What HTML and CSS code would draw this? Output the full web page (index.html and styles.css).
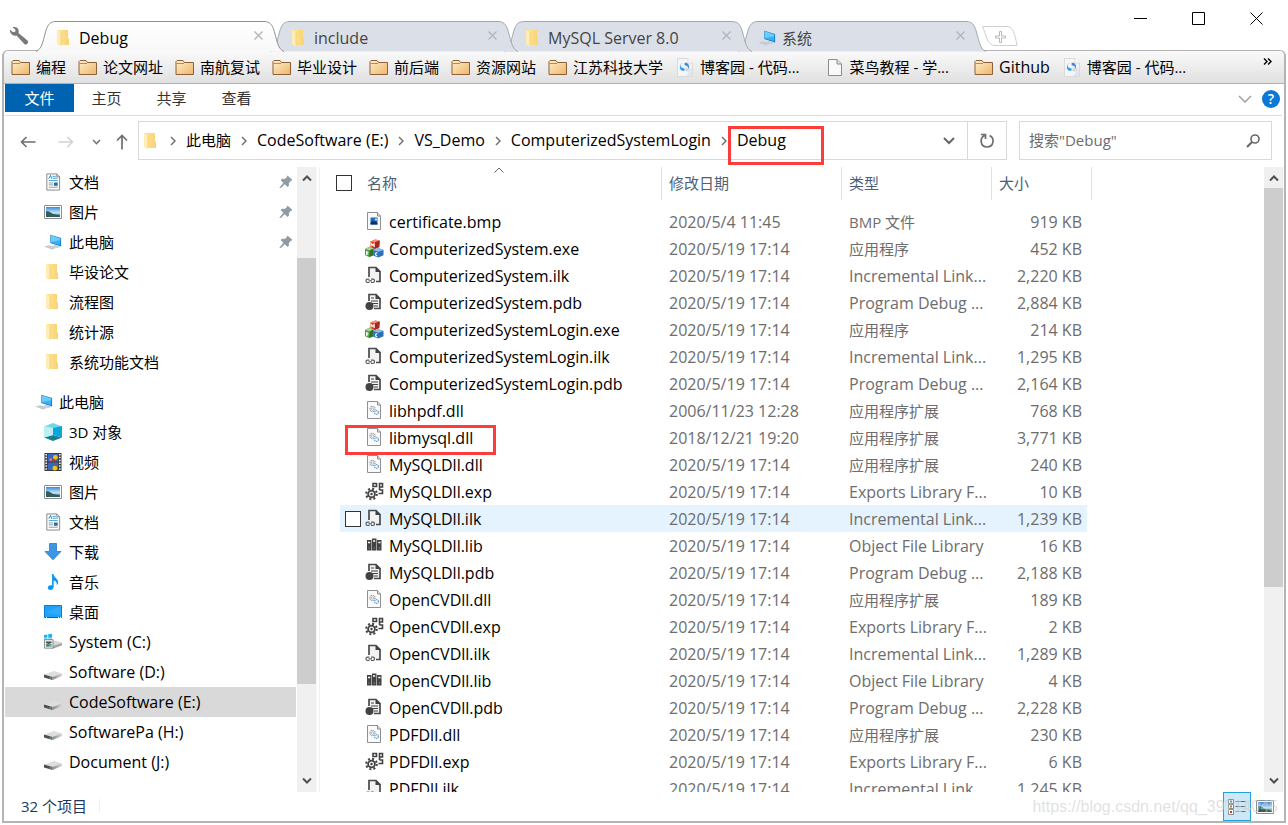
FILE: index.html
```html
<!DOCTYPE html>
<html lang="zh-CN">
<head>
<meta charset="utf-8">
<title>Debug</title>
<link rel="stylesheet" href="styles.css">
</head>
<body>
<svg class="sprite" aria-hidden="true">
  <defs>
    <linearGradient id="g-bm" x1="0" y1="0" x2="1" y2="1"><stop offset="0" stop-color="#fff0c8"/><stop offset="1" stop-color="#eeb46c"/></linearGradient>
    <linearGradient id="g-tab" x1="0" y1="0" x2="0" y2="1"><stop offset="0" stop-color="#ffffff"/><stop offset="1" stop-color="#f8f8f8"/></linearGradient>
    <linearGradient id="g-pic" x1="0" y1="0" x2="0" y2="1"><stop offset="0" stop-color="#3c86dc"/><stop offset=".55" stop-color="#bfe3fa"/><stop offset="1" stop-color="#4d7f86"/></linearGradient>
    <linearGradient id="g-fold" x1="0" y1="0" x2="1" y2="0"><stop offset="0" stop-color="#ffe59a"/><stop offset="1" stop-color="#f8d374"/></linearGradient>
    <linearGradient id="g-drive" x1="0" y1="0" x2="1" y2="0"><stop offset="0" stop-color="#8a8a8a"/><stop offset="1" stop-color="#d6d6d6"/></linearGradient>
  </defs>
  <symbol id="folder" viewBox="0 0 18 18"><path d="M2 1H13V9L14 10V16H3Z" fill="url(#g-fold)"/><path d="M2 1L6 3V17.500L2 15Z" fill="#ffedb5"/><path d="M6 3V16" stroke="#ecc76a" stroke-width=".6"/></symbol>
  <symbol id="bm-folder" viewBox="0 0 20 17"><path d="M1 15.500V2.500L2 1.500H8L9.500 3.500H18.500V15.500Z" fill="url(#g-bm)" stroke="#8d6038"/><path d="M1.500 4.500H9" stroke="#b98a55" fill="none"/></symbol>
  <symbol id="site" viewBox="0 0 16 19"><path d="M.5.5H11L15.500 5V18.500H.5Z" fill="#f4f5f6" stroke="#d8dade"/><path d="M11 .5V5H15.500" fill="#fff" stroke="#d8dade"/><path d="M6 12L12 14.500L9 18H15V11L11 7Z" fill="#e2e5e9"/><path d="M6.500 4.500C2.500 6 3 9.500 6 10C8 10.500 8 11.500 7 12.800C3.500 13 2.500 10.500 3 8C3.400 6 4.800 5 6.500 4.500Z" fill="#2f9df0"/><path d="M8.500 13C12.500 11.500 12 8.500 9.200 7.800C7.500 7.300 7 6.300 8 4.800C11 4.600 12.300 7 12 9.500C11.600 11.500 10.500 12.500 8.500 13Z" fill="#3e86dc"/></symbol>
  <symbol id="page" viewBox="0 0 16 19"><path d="M1.500 1.500H10L14.500 6V17.500H1.500Z" fill="#fafafa" stroke="#8c8c8c"/><path d="M10 1.500V6H14.500" fill="#ddd" stroke="#8c8c8c"/></symbol>
  <symbol id="pc" viewBox="0 0 20 18"><path d="M7 1L19 4.500V14L7 10Z" fill="#1779c4"/><path d="M7.500 1.500L18 5V12.500L7.500 9.500Z" fill="#35b1f5"/><path d="M7.500 1.500L18 5V7L7.500 9Z" fill="#6ccbfb"/><path d="M12 12L18 14L15 16L9 14Z" fill="#c9ced3"/><path d="M0 14L5 12.500L14 15.500L9 17.500Z" fill="#d3d7dc"/><path d="M2 14L10 16.500M5 13L12 15.500" stroke="#adb3b9" stroke-width=".6"/></symbol>
  <symbol id="doc" viewBox="0 0 18 19"><path d="M2.500 1H13L16 4V18H2.500Z" fill="#fff" stroke="#7f8589"/><path d="M13 1V4H16" fill="none" stroke="#7f8589"/><path d="M4.500 6L6.500 2.500L7.500 6" stroke="#1a7fc4" fill="none"/><path d="M8.500 3.500H12M8.500 5.500H14M4.500 8H14" stroke="#3a9fd8"/><path d="M4.500 10.500H9M4.500 12.500H9M4.500 15H14" stroke="#8e979d"/><path d="M10 10H14V13.500H10Z" fill="#2c6f9e"/></symbol>
  <symbol id="picture" viewBox="0 0 18 14"><path d="M.5.5H17.500V13.500H.5Z" fill="#fff" stroke="#8c8f92"/><path d="M2 2H16V12H2Z" fill="url(#g-pic)"/><path d="M2 6L5 6.500L9 9L16 10V12H2Z" fill="#315f5c"/></symbol>
  <symbol id="pin" viewBox="0 0 14 14"><path d="M8.500 1L13 5L11.500 5.600L9.500 8.200V10.800L8.500 11.500L5.700 8.800L1.500 13L1 12.500L4.700 7.800L2 5L3 4.200L6 4.300L8.200 2.300Z" fill="#8e9ba5" stroke="#8e9ba5" stroke-width=".8"/></symbol>
  <symbol id="cube" viewBox="0 0 18 18"><path d="M9 0L18 3.500L9 7L0 3.500Z" fill="#6fd8e6"/><path d="M0 14.500L9 12L18 14.500L9 18Z" fill="#14808f"/><path d="M9 5L0 3V14.500L9 12Z" fill="#bdeff2"/><path d="M9 5L18 3V14.500L9 12Z" fill="#0aa7da"/></symbol>
  <symbol id="video" viewBox="0 0 18 19"><path d="M0 0H18V19H0Z" fill="#3b3b3b"/><path d="M3.500 1H14.500V9H3.500ZM3.500 10H14.500V18H3.500Z" fill="#3569c0"/><circle cx="11.500" cy="4.500" r="2.500" fill="#f0c417"/><circle cx="6.500" cy="7" r="1.500" fill="#e86aa0"/><circle cx="9.500" cy="7.500" r="1.500" fill="#cf2e1e"/><circle cx="11" cy="16" r="2.500" fill="#f0c417"/><path d="M11 9.500L13 12H10Z" fill="#c73d20"/><path d="M1.800 1V19M16.200 1V19" stroke="#fff" stroke-width="1.600" stroke-dasharray="1.600 1.400"/></symbol>
  <symbol id="download" viewBox="0 0 18 18"><path d="M5.500.5H12.500V8.500H17L9 16.800L1 8.500H5.500Z" fill="#3c96e8" stroke="#2b79c4" stroke-width=".8"/></symbol>
  <symbol id="music" viewBox="0 0 18 19"><path d="M8 1H9.500C10 5 14 5.500 14.500 9.500C14.500 11.500 13.500 12.500 13 13C13.500 9.500 11.500 8.500 9.700 8V14.500C9.700 18.500 3.500 19 3.500 15.600C3.500 13 6 12.500 8 13Z" fill="#0a99f2"/></symbol>
  <symbol id="desktop" viewBox="0 0 18 14"><path d="M.5.5H17.500V12.500H.5Z" fill="#1ea1fb" stroke="#0b7dd0"/><path d="M1 8L17 1V10Z" fill="#42b4ff" opacity=".5"/><path d="M1 12.500H17" stroke="#0f5f9e"/><path d="M2 12.500H3M14 12.500H15M16 12.500H17" stroke="#fff"/></symbol>
  <symbol id="drive" viewBox="0 0 18 18"><path d="M0 11.500L10 8L18 10.500L9 14.500Z" fill="#dedede"/><path d="M0 11.500L8.500 14V17L0 14.500Z" fill="#4b4f50"/><path d="M8.500 14L18 10.500V13L8.500 17Z" fill="url(#g-drive)"/><path d="M5.500 15H7.500" stroke="#7fd28a"/></symbol>
  <symbol id="sysdrive" viewBox="0 0 19 18"><path d="M5 11.500L11 7.500L19 9.500V12.500L9 16L5 14.500Z" fill="#d8d8d8"/><path d="M9 13.500L19 10V12.500L9 16Z" fill="#a3a3a3"/><path d="M0 1.500L3.600 1V4.400H0ZM4.400.9L8.500.3V4.400H4.400ZM0 5.200H3.600V8H0ZM4.400 5.200H8.500V8.400H4.400Z" fill="#19b5ee"/><path d="M.5 6.500H9.500V15.500H.5Z" fill="#eef1f0" stroke="#858b8b"/><path d="M2 8.500H8V10L5 11L2 10Z" fill="#5a4b48"/><path d="M2 11H8V14H2Z" fill="#6aa095"/><circle cx="4" cy="12.500" r="1.200" fill="#3171a5"/></symbol>
  <symbol id="bmp" viewBox="0 0 19 19"><path d="M2.500.5H12.500L15.500 4V17.500H2.500Z" fill="#fafafa" stroke="#8f8f8f"/><path d="M12.500.5V4H15.500" fill="#ddd" stroke="#8f8f8f"/><path d="M5.500 5.500H12.500V12.500H5.500Z" fill="#1a6cc4"/><path d="M5.500 12.500V11L7.500 8.500L9 10L10.500 9L12.500 11.500V12.500Z" fill="#0b2f5e"/><circle cx="11" cy="7.500" r="1" fill="#fff"/></symbol>
  <symbol id="exe" viewBox="0 0 20 20"><path d="M5.500 2.500L11 .5L15.500 1.500L15 8.500L10 10.500L5 8.500Z" fill="#d8402c"/><path d="M5.500 2.500L11 .5L15.500 1.500L10.500 3.500Z" fill="#f1907e"/><path d="M10.500 3.500L15.500 1.500L15 8.500L10 10.500Z" fill="#a82919"/><path d="M0 10.500L4 8.500L9 10V17L4.500 19L0 17Z" fill="#4b9c3c"/><path d="M0 10.500L4 8.500L9 10L5 12Z" fill="#a3d690"/><path d="M5 12L9 10V17L4.500 19Z" fill="#2f7228"/><path d="M9 11.500L14 9.500L19.500 11.500V17L14 19.500L9 17.500Z" fill="#2d6fb9"/><path d="M9 11.500L14 9.500L19.500 11.500L14 13.500Z" fill="#8dc0ee"/><path d="M6.300 8V4.500L8 6.500L9.600 5V8.500M1.700 17V13.500L3.700 14M1.700 15.300L3.500 15.600M13 14.700C10.500 13.700 10.500 17.700 13 17.700" fill="none" stroke="#fff" stroke-width="1.200"/></symbol>
  <symbol id="ilk" viewBox="0 0 19 19"><path d="M4 11V1.500H11L15 5.500V15.500H11" fill="#f1f2f3" stroke="#4a4a4a" stroke-width="1.700"/><path d="M10.500 1V6H16Z" fill="#424242"/><path d="M4.500 13.200H2.500C.5 13.200.5 16.500 2.500 16.500H4.500M6 13.200H8C10 13.200 10 16.500 8 16.500H6M3.500 14.900H7" fill="none" stroke="#5a5a5a" stroke-width="1.200"/></symbol>
  <symbol id="pdb" viewBox="0 0 19 19"><path d="M4 8V1.500H11L15 5.500V15.500H9" fill="#f1f2f3" stroke="#4a4a4a" stroke-width="1.700"/><path d="M10.500 1V6H16Z" fill="#424242"/><path d="M6 5H9M6 8H13M7 10.500H13M9 13H13" stroke="#424242" stroke-width="1.200"/><circle cx="4.500" cy="13" r="4" fill="#424242"/></symbol>
  <symbol id="dll" viewBox="0 0 19 19"><path d="M2.500.5H12.500L15.500 4V17.500H2.500Z" fill="#fafafa" stroke="#8f8f8f"/><path d="M12.500.5V4H15.500" fill="#ddd" stroke="#8f8f8f"/><circle cx="7.500" cy="8" r="2.600" fill="none" stroke="#98a2aa" stroke-width="1.300" stroke-dasharray="1.300 .7"/><circle cx="7.500" cy="8" r="1.200" fill="none" stroke="#9aa5ad" stroke-width=".7"/><circle cx="11.500" cy="11.500" r="1.900" fill="none" stroke="#6ea5cf" stroke-width="1.300" stroke-dasharray="1.300 .6"/></symbol>
  <symbol id="exp" viewBox="0 0 19 19"><circle cx="6.500" cy="12" r="3.400" fill="#f4f4f4" stroke="#424242" stroke-width="1.800"/><circle cx="6.500" cy="12" r="5.300" fill="none" stroke="#424242" stroke-width="2" stroke-dasharray="2 2.160"/><circle cx="6.500" cy="12" r="1.200" fill="#424242"/><path d="M8 1.500H11.500V4.500H8ZM14.500 1.500H17.500V5H14.500ZM14.500 8H17.500V11.500H13.500M14.500 8V5" fill="none" stroke="#424242" stroke-width="1.600"/></symbol>
  <symbol id="lib" viewBox="0 0 19 19"><path d="M2 4H6.500V14.500H2ZM7 2.500H11.500V14.500H7ZM12 4H16.500V14.500H12Z" fill="#424242"/><path d="M3 6.500H5.200M8 5H10.200M13.300 6.500H15.500" stroke="#fff" stroke-width="1.600"/><path d="M3.500 12H4.500M8.700 12H9.700M14 12H15" stroke="#aaa"/></symbol>
  <symbol id="sep" viewBox="0 0 6 10"><path d="M1 1L5 5L1 9" fill="none" stroke="#707070" stroke-width="1.500"/></symbol>
  <symbol id="tab-shape" viewBox="0 0 248 31"><path d="M0 30.500C6 28 7 20 9 13C11 5 13 .5 20 .5H228C235 .5 237 5 239 13C241 20 242 28 248 30.500"/></symbol>
  <symbol id="close" viewBox="0 0 9 9"><path d="M.5.5L8.500 8.500M8.500.5L.5 8.500" stroke="#b5b5b5" stroke-width="1.400"/></symbol>
  <symbol id="up" viewBox="0 0 10 7"><path d="M1 5.500L5 1.500L9 5.500" fill="none" stroke="#505050" stroke-width="2"/></symbol>
  <symbol id="down" viewBox="0 0 10 7"><path d="M1 1.500L5 5.500L9 1.500" fill="none" stroke="#505050" stroke-width="2"/></symbol>
</svg>

<header class="strip">
  <button class="wrench" aria-label="设置"><svg viewBox="0 0 20 20" width="20" height="20"><path d="M3.500 1.500C6.500.2 9.500 2 9.700 5C9.800 6 9.700 6.500 9.500 7L18.800 14.800C20 17 17.500 19.500 15.500 18.300L7.500 9.500C5 10.300 1.500 8.500 1 5.500C.9 5 1 4.300 1.200 3.800L4 6.300L6.500 5.500L6.300 3.500Z" fill="#7a7a7a"/></svg></button>
  <nav class="tabs">
    <a class="tab active" href="#"><svg class="shape"><use href="#tab-shape"/></svg><svg class="i18"><use href="#folder"/></svg><span class="latin">Debug</span><svg class="x"><use href="#close"/></svg></a>
    <a class="tab second" href="#"><svg class="shape"><use href="#tab-shape"/></svg><svg class="i18"><use href="#folder"/></svg><span class="latin">include</span><svg class="x"><use href="#close"/></svg></a>
    <a class="tab third" href="#"><svg class="shape"><use href="#tab-shape"/></svg><svg class="i18"><use href="#folder"/></svg><span class="latin">MySQL Server 8.0</span><svg class="x"><use href="#close"/></svg></a>
    <a class="tab" href="#"><svg class="shape"><use href="#tab-shape"/></svg><svg class="i18"><use href="#pc"/></svg><span>系统</span><svg class="x"><use href="#close"/></svg></a>
  </nav>
  <button class="newtab" aria-label="新标签"><svg viewBox="0 0 36 20" width="36" height="20"><path d="M.5.5H25C31 .5 33 8 35 19.500H13C5 19.500 4 8 .5.500Z" fill="#fff" stroke="#cfcfcf"/><path d="M17.500 5.500H19.500V10H23.500V12H19.500V16.500H17.500V12H13.500V10H17.500Z" fill="#fff" stroke="#b8b8b8"/></svg></button>
  <div class="winbtns">
    <button aria-label="最小化"><svg viewBox="0 0 13 13" width="13" height="13"><path d="M0 6.500H13" stroke="#000"/></svg></button>
    <button aria-label="最大化"><svg viewBox="0 0 13 13" width="13" height="13"><path d="M.5.5H12.500V12.500H.5Z" fill="none" stroke="#000"/></svg></button>
    <button aria-label="关闭"><svg viewBox="0 0 13 13" width="13" height="13"><path d="M.5.5L12.500 12.500M12.500.5L.5 12.500" stroke="#000"/></svg></button>
  </div>
</header>

<div class="window">
  <nav class="bookmarks">
    <a href="#"><svg><use href="#bm-folder"/></svg>编程</a>
    <a href="#"><svg><use href="#bm-folder"/></svg>论文网址</a>
    <a href="#"><svg><use href="#bm-folder"/></svg>南航复试</a>
    <a href="#"><svg><use href="#bm-folder"/></svg>毕业设计</a>
    <a href="#"><svg><use href="#bm-folder"/></svg>前后端</a>
    <a href="#"><svg><use href="#bm-folder"/></svg>资源网站</a>
    <a href="#"><svg><use href="#bm-folder"/></svg>江苏科技大学</a>
    <a href="#" class="site"><svg><use href="#site"/></svg>博客园 - 代码...</a>
    <a href="#" class="site"><svg><use href="#page"/></svg>菜鸟教程 - 学...</a>
    <a href="#" class="latin"><svg><use href="#bm-folder"/></svg>Github</a>
    <a href="#" class="site"><svg><use href="#site"/></svg>博客园 - 代码...</a>
    <button class="more" aria-label="更多"><svg viewBox="0 0 9 7" width="9" height="7"><path d="M1 .5L4 3.500L1 6.500M5 .5L8 3.500L5 6.500" fill="none" stroke="#000" stroke-width="1.400"/></svg></button>
  </nav>

  <div class="ribbon">
    <button class="file">文件</button>
    <button>主页</button>
    <button>共享</button>
    <button>查看</button>
    <span class="ribbon-end">
      <svg viewBox="0 0 14 8" width="14" height="8"><path d="M1 1L7 7L13 1" fill="none" stroke="#999" stroke-width="1.300"/></svg>
      <button class="help" aria-label="帮助">?</button>
    </span>
  </div>

  <div class="navbar">
    <div class="history">
      <button aria-label="后退"><svg viewBox="0 0 16 12" width="16" height="12"><path d="M15.500 6H1.500M6.500 1L1.500 6L6.500 11" fill="none" stroke="#6e6e6e" stroke-width="1.600"/></svg></button>
      <button aria-label="前进"><svg viewBox="0 0 16 12" width="16" height="12"><path d="M.5 6H14.500M9.500 1L14.500 6L9.500 11" fill="none" stroke="#d2d2d2" stroke-width="1.600"/></svg></button>
      <button aria-label="最近"><svg viewBox="0 0 9 6" width="9" height="6"><path d="M1 1L4.500 4.500L8 1" fill="none" stroke="#777" stroke-width="1.600"/></svg></button>
      <button aria-label="上移"><svg viewBox="0 0 12 16" width="12" height="16"><path d="M6 15.500V1.500M1 6.500L6 1.500L11 6.500" fill="none" stroke="#6e6e6e" stroke-width="1.700"/></svg></button>
    </div>
    <div class="address">
      <svg class="i18"><use href="#folder"/></svg>
      <svg class="sep"><use href="#sep"/></svg><a href="#">此电脑</a>
      <svg class="sep"><use href="#sep"/></svg><a href="#" class="latin">CodeSoftware (E:)</a>
      <svg class="sep"><use href="#sep"/></svg><a href="#" class="latin">VS_Demo</a>
      <svg class="sep"><use href="#sep"/></svg><a href="#" class="latin">ComputerizedSystemLogin</a>
      <svg class="sep"><use href="#sep"/></svg><a href="#" class="latin marked">Debug</a>
      <button class="drop" aria-label="历史记录"><svg viewBox="0 0 12 8" width="12" height="8"><path d="M1 1L6 6L11 1" fill="none" stroke="#666" stroke-width="2"/></svg></button>
      <button class="refresh" aria-label="刷新"><svg viewBox="0 0 16 16" width="16" height="16"><path d="M2 1.500H6.500V6M5.500 2.500C.5 5 1 14 8 14C15 14 16 5 10.500 2.500" fill="none" stroke="#6e6e6e" stroke-width="1.700"/></svg></button>
    </div>
    <label class="search"><input type="text" placeholder="搜索&quot;Debug&quot;" aria-label="搜索"><svg viewBox="0 0 14 14" width="14" height="14"><circle cx="9" cy="5" r="4" fill="none" stroke="#666" stroke-width="1.600"/><path d="M6 8L1 13" stroke="#666" stroke-width="2"/></svg></label>
  </div>

  <div class="panes">
    <nav class="tree">
      <a href="#"><svg><use href="#doc"/></svg>文档<svg class="pin"><use href="#pin"/></svg></a>
      <a href="#"><svg><use href="#picture"/></svg>图片<svg class="pin"><use href="#pin"/></svg></a>
      <a href="#"><svg><use href="#pc"/></svg>此电脑<svg class="pin"><use href="#pin"/></svg></a>
      <a href="#"><svg><use href="#folder"/></svg>毕设论文</a>
      <a href="#"><svg><use href="#folder"/></svg>流程图</a>
      <a href="#"><svg><use href="#folder"/></svg>统计源</a>
      <a href="#"><svg><use href="#folder"/></svg>系统功能文档</a>
      <a href="#" class="root"><svg><use href="#pc"/></svg>此电脑</a>
      <a href="#"><svg><use href="#cube"/></svg>3D 对象</a>
      <a href="#"><svg><use href="#video"/></svg>视频</a>
      <a href="#"><svg><use href="#picture"/></svg>图片</a>
      <a href="#"><svg><use href="#doc"/></svg>文档</a>
      <a href="#"><svg><use href="#download"/></svg>下载</a>
      <a href="#"><svg><use href="#music"/></svg>音乐</a>
      <a href="#"><svg><use href="#desktop"/></svg>桌面</a>
      <a href="#" class="latin"><svg><use href="#sysdrive"/></svg>System (C:)</a>
      <a href="#" class="latin"><svg><use href="#drive"/></svg>Software (D:)</a>
      <a href="#" class="latin current"><svg><use href="#drive"/></svg>CodeSoftware (E:)</a>
      <a href="#" class="latin"><svg><use href="#drive"/></svg>SoftwarePa (H:)</a>
      <a href="#" class="latin"><svg><use href="#drive"/></svg>Document (J:)</a>
    </nav>
    <div class="scroll tree-scroll"><svg><use href="#up"/></svg><div class="track"><div class="thumb"></div></div><svg><use href="#down"/></svg></div>

    <main class="files">
      <table>
        <colgroup><col class="c-name"><col class="c-date"><col class="c-type"><col class="c-size"></colgroup>
        <thead>
          <tr><th><label class="head-name"><input type="checkbox">名称</label><svg class="sort" viewBox="0 0 10 6"><path d="M.5 5.500L5 1L9.500 5.500" fill="none" stroke="#666"/></svg></th><th>修改日期</th><th>类型</th><th>大小</th></tr>
        </thead>
        <tbody>
          <tr><td><div class="fname"><svg><use href="#bmp"/></svg>certificate.bmp</div></td><td>2020/5/4 11:45</td><td class="cn">BMP 文件</td><td>919 KB</td></tr>
          <tr><td><div class="fname"><svg><use href="#exe"/></svg>ComputerizedSystem.exe</div></td><td>2020/5/19 17:14</td><td class="cn">应用程序</td><td>452 KB</td></tr>
          <tr><td><div class="fname"><svg><use href="#ilk"/></svg>ComputerizedSystem.ilk</div></td><td>2020/5/19 17:14</td><td>Incremental Link...</td><td>2,220 KB</td></tr>
          <tr><td><div class="fname"><svg><use href="#pdb"/></svg>ComputerizedSystem.pdb</div></td><td>2020/5/19 17:14</td><td>Program Debug ...</td><td>2,884 KB</td></tr>
          <tr><td><div class="fname"><svg><use href="#exe"/></svg>ComputerizedSystemLogin.exe</div></td><td>2020/5/19 17:14</td><td class="cn">应用程序</td><td>214 KB</td></tr>
          <tr><td><div class="fname"><svg><use href="#ilk"/></svg>ComputerizedSystemLogin.ilk</div></td><td>2020/5/19 17:14</td><td>Incremental Link...</td><td>1,295 KB</td></tr>
          <tr><td><div class="fname"><svg><use href="#pdb"/></svg>ComputerizedSystemLogin.pdb</div></td><td>2020/5/19 17:14</td><td>Program Debug ...</td><td>2,164 KB</td></tr>
          <tr><td><div class="fname"><svg><use href="#dll"/></svg>libhpdf.dll</div></td><td>2006/11/23 12:28</td><td class="cn">应用程序扩展</td><td>768 KB</td></tr>
          <tr><td><div class="fname marked"><svg><use href="#dll"/></svg>libmysql.dll</div></td><td>2018/12/21 19:20</td><td class="cn">应用程序扩展</td><td>3,771 KB</td></tr>
          <tr><td><div class="fname"><svg><use href="#dll"/></svg>MySQLDll.dll</div></td><td>2020/5/19 17:14</td><td class="cn">应用程序扩展</td><td>240 KB</td></tr>
          <tr><td><div class="fname"><svg><use href="#exp"/></svg>MySQLDll.exp</div></td><td>2020/5/19 17:14</td><td>Exports Library F...</td><td>10 KB</td></tr>
          <tr class="hover"><td><div class="fname"><input type="checkbox" aria-label="选择 MySQLDll.ilk"><svg><use href="#ilk"/></svg>MySQLDll.ilk</div></td><td>2020/5/19 17:14</td><td>Incremental Link...</td><td>1,239 KB</td></tr>
          <tr><td><div class="fname"><svg><use href="#lib"/></svg>MySQLDll.lib</div></td><td>2020/5/19 17:14</td><td>Object File Library</td><td>16 KB</td></tr>
          <tr><td><div class="fname"><svg><use href="#pdb"/></svg>MySQLDll.pdb</div></td><td>2020/5/19 17:14</td><td>Program Debug ...</td><td>2,188 KB</td></tr>
          <tr><td><div class="fname"><svg><use href="#dll"/></svg>OpenCVDll.dll</div></td><td>2020/5/19 17:14</td><td class="cn">应用程序扩展</td><td>189 KB</td></tr>
          <tr><td><div class="fname"><svg><use href="#exp"/></svg>OpenCVDll.exp</div></td><td>2020/5/19 17:14</td><td>Exports Library F...</td><td>2 KB</td></tr>
          <tr><td><div class="fname"><svg><use href="#ilk"/></svg>OpenCVDll.ilk</div></td><td>2020/5/19 17:14</td><td>Incremental Link...</td><td>1,289 KB</td></tr>
          <tr><td><div class="fname"><svg><use href="#lib"/></svg>OpenCVDll.lib</div></td><td>2020/5/19 17:14</td><td>Object File Library</td><td>4 KB</td></tr>
          <tr><td><div class="fname"><svg><use href="#pdb"/></svg>OpenCVDll.pdb</div></td><td>2020/5/19 17:14</td><td>Program Debug ...</td><td>2,228 KB</td></tr>
          <tr><td><div class="fname"><svg><use href="#dll"/></svg>PDFDll.dll</div></td><td>2020/5/19 17:14</td><td class="cn">应用程序扩展</td><td>230 KB</td></tr>
          <tr><td><div class="fname"><svg><use href="#exp"/></svg>PDFDll.exp</div></td><td>2020/5/19 17:14</td><td>Exports Library F...</td><td>6 KB</td></tr>
          <tr><td><div class="fname"><svg><use href="#ilk"/></svg>PDFDll.ilk</div></td><td>2020/5/19 17:14</td><td>Incremental Link...</td><td>1,245 KB</td></tr>
        </tbody>
      </table>
    </main>
    <div class="scroll file-scroll"><svg><use href="#up"/></svg><div class="track"><div class="thumb"></div></div><svg><use href="#down"/></svg></div>
  </div>

  <footer class="status">
    <span class="count">32 个项目</span>
    <div class="views">
      <button class="on" aria-label="详细信息"><svg viewBox="0 0 18 16" width="18" height="16"><path d="M.5.5H5.500V4.500H.5ZM.5 5.500H5.500V9.500H.5ZM.5 10.500H5.500V15.500H.5Z" fill="#fff" stroke="#8d8d8d"/><path d="M2 2.500H4" stroke="#3c6fa0" stroke-width="2"/><path d="M2 7.500H4" stroke="#9b8a2c" stroke-width="2"/><path d="M2 13H4" stroke="#c43a22" stroke-width="2"/><path d="M7.500 2.500H11.500M12.500 2.500H17.500M7.500 7.500H11.500M12.500 7.500H17.500M7.500 12.500H11.500M12.500 12.500H17.500" stroke="#6b6b6b"/></svg></button>
      <button aria-label="缩略图"><svg width="18" height="14"><use href="#picture"/></svg></button>
    </div>
    <span class="watermark">https://blog.csdn.net/qq_39714045</span>
  </footer>
</div>
</body>
</html>
```

FILE: styles.css
```css
*, *::before, *::after { box-sizing: border-box; }

body {
  margin: 0;
  height: 100vh;
  display: flex;
  flex-direction: column;
  background: #fff;
  color: #000;
  font: 15px/20px "Open Sans", "Noto Sans CJK SC", sans-serif;
  overflow: hidden;
}

a { color: inherit; text-decoration: none; }
button { border: 0; padding: 0; background: none; font: inherit; color: inherit; display: flex; align-items: center; justify-content: center; }
svg { flex: none; display: block; }
.sprite { position: absolute; width: 0; height: 0; }
.i18 { width: 18px; height: 18px; }
.latin { font-size: 16px; }

/* Tab strip */
.strip { display: flex; height: 51px; flex: none; padding-left: 9px; align-items: flex-end; }
.wrench { width: 20px; margin: 0 14px 5px 0; }
.tabs { display: flex; }
.tab { position: relative; z-index: 1; width: 234px; height: 30px; display: flex; align-items: center; gap: 6px; padding: 4px 14px 0 13px; color: #444; }
.tab .shape { position: absolute; left: -7px; top: 0; width: 248px; height: 31px; fill: #dbe0e8; stroke: #a4a7ab; z-index: -1; }
.tab.third { z-index: 2; }
.tab.second { z-index: 3; }
.tab.active { z-index: 5; padding-left: 12px; color: #000; }
.tab.active .shape { fill: url(#g-tab); stroke: #909090; }
.tab .x { width: 9px; height: 9px; margin: 0 0 6px auto; }
.newtab { margin: 0 0 5px 3px; }
.winbtns { margin: 0 25px 26px auto; display: flex; gap: 45px; }

/* Window frame */
.window { flex: 1; min-height: 0; display: flex; flex-direction: column; margin: -1px 2px 2px; border: 2px solid #b4b4b4; border-top-width: 1px; border-radius: 6px 6px 0 0; position: relative; }

.bookmarks { height: 33px; flex: none; display: flex; align-items: center; padding: 0 12px 0 7px; background: linear-gradient(#fafafa, #e0e0e0); border-bottom: 1px solid #b0b0b0; border-radius: 5px 5px 0 0; white-space: nowrap; }
.bookmarks a { display: flex; align-items: center; gap: 5px; margin-right: 12px; }
.bookmarks a svg { width: 20px; height: 17px; }
.bookmarks a.site { gap: 7px; margin: 0 25px 0 2px; }
.bookmarks a.site svg { width: 16px; height: 19px; }
.more { margin: 0 0 12px auto; }

.ribbon { display: flex; height: 32px; flex: none; margin: 0 2px 0 1px; border-bottom: 1px solid #dcdcdc; color: #333; }
.ribbon > button { width: 65px; height: 28px; }
.ribbon > .file { width: 69px; background: #0063b1; color: #fff; }
.ribbon-end { margin-left: auto; display: flex; align-items: center; gap: 10px; padding: 0 2px 2px 0; }
.help { width: 18px; height: 18px; border-radius: 50%; background: #0a78d6; color: #fff; font-size: 14px; font-weight: 600; }

.navbar { height: 51px; flex: none; display: flex; padding: 5px 12px 7px 16px; }
.history { width: 118px; flex: none; display: flex; align-items: center; gap: 20px; padding-top: 2px; }
.history button:nth-child(2) { margin-left: 2px; }
.history button:nth-child(3) { margin-left: -2px; }
.history button:nth-child(4) { margin-left: -5px; }
.address { flex: 1; min-width: 0; display: flex; align-items: center; border: 1px solid #d9d9d9; padding-left: 3px; white-space: nowrap; }
.address a { padding-bottom: 2px; }
.sep { width: 6px; height: 10px; margin: 0 10px; }
.address .marked { position: relative; }
.address .marked::after { content: ""; position: absolute; left: -9px; top: -4px; width: 96px; height: 39px; border: 3px solid #fd3c3c; }
.drop { width: 36px; margin-left: auto; }
.refresh { width: 39px; height: 37px; border-left: 1px solid #d9d9d9; }
.search { width: 253px; flex: none; margin-left: 12px; display: flex; align-items: center; border: 1px solid #d9d9d9; padding: 0 11px 0 9px; }
.search input { flex: 1; min-width: 0; border: 0; padding: 0 0 2px; background: none; outline: 0; font: inherit; }
.search input::placeholder { color: #6d6d6d; opacity: 1; }

/* Panes */
.panes { flex: 1; min-height: 0; display: flex; }
.tree { width: 293px; flex: none; overflow: hidden; padding-left: 1px; }
.tree a { display: flex; align-items: center; height: 30px; gap: 7px; padding: 0 3px 0 39px; margin-right: 1px; }
.tree a svg { width: 18px; height: 18px; }
.tree .root { padding-left: 30px; margin-top: 10px; gap: 6px; }
.tree .current { background: #d9d9d9; }
.tree a .pin { width: 14px; height: 14px; margin-left: auto; }

.scroll { width: 20px; flex: none; background: #f0f0f0; border-right: 1px solid #f8f8f8; display: flex; flex-direction: column; align-items: center; padding: 8px 0; }
.scroll svg { width: 10px; height: 7px; }
.track { flex: 1; align-self: stretch; padding: 6px 0; display: flex; flex-direction: column; }
.thumb { background: #cdcdcd; }
.tree-scroll .track { padding-top: 76px; }
.tree-scroll .thumb { flex: 0 0 83%; }
.file-scroll .thumb { flex: 0 0 68.5%; }

.files { flex: 1; min-width: 0; overflow: hidden; margin-left: 2px; border-left: 1px solid #f0f0f0; padding-left: 16px; }
table { table-layout: fixed; width: 756px; border-collapse: separate; border-spacing: 0; color: #6d6d6d; font-size: 16px; }
.c-name { width: 326px; }
.c-date { width: 180px; }
.c-type { width: 150px; }
.c-size { width: 100px; }
th { height: 33px; padding: 0 0 2px 7px; font-weight: 400; font-size: 15px; text-align: left; color: #4c607a; border-right: 1px solid #e2e2e2; position: relative; }
th:first-child { padding-left: 0; }
.head-name { display: flex; align-items: center; gap: 15px; }
input[type=checkbox] { appearance: none; width: 16px; height: 16px; margin: 0; border: 1px solid #333; background: #fff; flex: none; }
.sort { position: absolute; left: 50%; top: 0; width: 10px; height: 6px; margin-left: -5px; }
tbody::before { content: ""; display: block; height: 8px; }
td { height: 27px; padding: 0 0 0 7px; white-space: nowrap; }
td.cn { font-size: 15px; }
td:first-child { padding: 0; border-left: 4px solid transparent; background-clip: padding-box; }
td:last-child { text-align: right; padding: 0 5px 0 0; border-right: 5px solid transparent; background-clip: padding-box; }
.hover td { background-color: #e5f3ff; }
.fname { position: relative; display: flex; align-items: center; height: 27px; gap: 5px; padding-left: 25px; color: #000; }
.fname svg { width: 19px; height: 19px; }
.fname input { margin-left: -20px; margin-right: -1px; }
.fname.marked::after { content: ""; position: absolute; left: 5px; top: 1px; width: 151px; height: 30px; border: 3px solid #fd3c3c; z-index: 1; }

/* Status bar */
.status { position: relative; height: 29px; flex: none; display: flex; align-items: center; padding-left: 17px; color: #1e395b; }
.count { border-right: 1px solid #f0f0f0; padding-right: 12px; margin-bottom: 2px; line-height: 14px; }
.views { margin-left: auto; display: flex; }
.views button { width: 28px; height: 29px; }
.views .on { background: #cce8f6; border: 1px solid #26a0da; }
.views button:last-child { margin-right: 5px; }
.watermark { position: absolute; right: 6px; top: 5px; font: 16px/20px "Liberation Sans", sans-serif; color: rgba(205, 205, 205, .6); }
```
